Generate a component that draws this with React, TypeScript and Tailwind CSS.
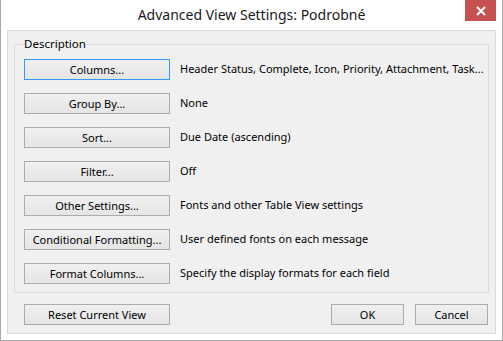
const rows = [
  { label: "Columns...", value: "Header Status, Complete, Icon, Priority, Attachment, Task...", focused: true },
  { label: "Group By...", value: "None" },
  { label: "Sort...", value: "Due Date (ascending)" },
  { label: "Filter...", value: "Off" },
  { label: "Other Settings...", value: "Fonts and other Table View settings" },
  { label: "Conditional Formatting...", value: "User defined fonts on each message" },
  { label: "Format Columns...", value: "Specify the display formats for each field" },
];

const Btn = ({ children, focused, w }: { children: string; focused?: boolean; w: string }) => (
  <button
    className={`${w} h-[21px] shrink-0 flex items-center justify-center bg-gradient-to-b from-[#f0f0f0] to-[#e5e5e5] border text-[11px] text-black leading-none whitespace-nowrap ${
      focused ? "border-[#3399ff]" : "border-[#acacac]"
    }`}
  >
    {children}
  </button>
);

export default function App() {
  return (
    <div
      className="w-[503px] h-[341px] bg-white border-x border-b border-[#aaaaaa] flex flex-col"
      style={{ fontFamily: '"Noto Sans", "Open Sans", sans-serif' }}
    >
      {/* title bar */}
      <div className="h-[30px] flex items-start relative">
        <div className="flex-1 text-center text-[14px] leading-[30px] text-[#1a1a1a]">
          Advanced View Settings: Podrobné
        </div>
        <div className="absolute right-[6px] top-0 w-[31px] h-[21px] bg-[#c75050] flex items-center justify-center">
          <svg width="10" height="10" viewBox="0 0 10 10">
            <path d="M1 1 L9 9 M9 1 L1 9" stroke="white" strokeWidth="2" />
          </svg>
        </div>
      </div>

      {/* client area */}
      <div className="mx-[6px] h-[304px] border border-[#dadada] bg-[#f0f0f0] flex flex-col">
        <fieldset className="mx-[6px] mt-[5px] min-w-0 border border-[#dcdcdc] pl-[9px] pb-[8px]">
          <legend className="text-[11.5px] leading-[16px] text-black">Description</legend>
          <div className="mt-[7px] flex flex-col gap-[13px]">
            {rows.map((r) => (
              <div key={r.label} className="flex items-center gap-[10px]">
                <Btn w="w-[146px]" focused={r.focused}>
                  {r.label}
                </Btn>
                <span className="text-[11px] text-black whitespace-nowrap">{r.value}</span>
              </div>
            ))}
          </div>
        </fieldset>

        <div className="mt-[11px] pl-[16px] pr-[7px] flex items-center">
          <Btn w="w-[146px]">Reset Current View</Btn>
          <div className="flex-1" />
          <Btn w="w-[73px]">OK</Btn>
          <div className="w-[11px]" />
          <Btn w="w-[73px]">Cancel</Btn>
        </div>
      </div>
    </div>
  );
}
